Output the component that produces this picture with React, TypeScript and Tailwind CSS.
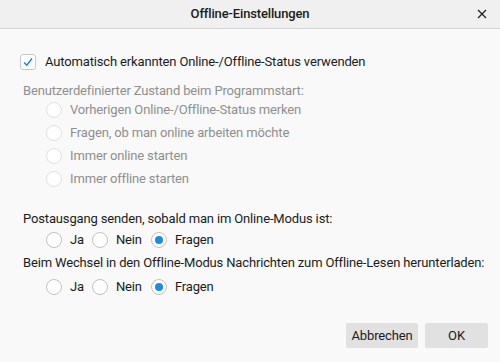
import React from "react";

function Radio({ checked, disabled }: { checked?: boolean; disabled?: boolean }) {
  return (
    <span
      className={`flex h-[16px] w-[16px] shrink-0 items-center justify-center rounded-full border bg-white ${
        disabled ? "border-[#e0e0e0]" : "border-[#c2c2c2]"
      }`}
    >
      {checked && <span className="h-[8px] w-[8px] rounded-full bg-[#1c8ddd]" />}
    </span>
  );
}

function RadioRow({ label, disabled }: { label: string; disabled?: boolean }) {
  return (
    <div className="flex h-[23px] items-center gap-[8px] pl-[46px]">
      <Radio disabled={disabled} />
      <span className={disabled ? "text-[#8f8f8f]" : ""}>{label}</span>
    </div>
  );
}

function InlineRadios() {
  return (
    <div className="flex h-[23px] items-center pl-[46px]">
      <Radio />
      <span className="ml-[8px]">Ja</span>
      <span className="ml-[8px]">
        <Radio />
      </span>
      <span className="ml-[8px]">Nein</span>
      <span className="ml-[9px]">
        <Radio checked />
      </span>
      <span className="ml-[8px]">Fragen</span>
    </div>
  );
}

export default function App() {
  return (
    <div
      className="flex h-[362px] w-[500px] flex-col bg-[#f9f9f9] text-[13px] tracking-[-0.15px] text-[#1b1b1b]"
      style={{ fontFamily: "Roboto, 'Liberation Sans', sans-serif" }}
    >
      <div className="relative flex h-[29px] items-center justify-center border-b border-[#d4d4d4] bg-[#f0f0f0]">
        <span className="font-medium">Offline-Einstellungen</span>
        <svg
          className="absolute right-[13px] top-[9px]"
          width="10"
          height="10"
          viewBox="0 0 10 10"
        >
          <path d="M1 1L9 9M9 1L1 9" stroke="#222" strokeWidth="1.3" />
        </svg>
      </div>
      <div className="flex flex-1 flex-col pt-[24px]">
        <div className="flex h-[18px] items-center gap-[9px] pl-[20px]">
          <span className="flex h-[16px] w-[16px] items-center justify-center rounded-[3px] border border-[#c9c9c9] bg-white">
            <svg width="12" height="12" viewBox="0 0 12 12">
              <path d="M2 6.5L4.8 9.3L10 2.5" fill="none" stroke="#0a84ff" strokeWidth="1.4" />
            </svg>
          </span>
          <span>Automatisch erkannten Online-/Offline-Status verwenden</span>
        </div>
        <div className="mt-[11px] flex h-[18px] items-center pl-[23px] text-[#8f8f8f]">
          Benutzerdefinierter Zustand beim Programmstart:
        </div>
        <div className="mt-[-2px] flex flex-col">
          <RadioRow label="Vorherigen Online-/Offline-Status merken" disabled />
          <RadioRow label="Fragen, ob man online arbeiten möchte" disabled />
          <RadioRow label="Immer online starten" disabled />
          <RadioRow label="Immer offline starten" disabled />
        </div>
        <div className="mt-[20px] flex h-[18px] items-center pl-[23px]">
          Postausgang senden, sobald man im Online-Modus ist:
        </div>
        <div className="mt-[0px]">
          <InlineRadios />
        </div>
        <div className="mt-[3px] flex h-[18px] items-center whitespace-nowrap pl-[23px]">
          Beim Wechsel in den Offline-Modus Nachrichten zum Offline-Lesen herunterladen:
        </div>
        <div className="mt-[3px]">
          <InlineRadios />
        </div>
        <div className="mt-auto flex justify-end gap-[7px] pb-[14px] pr-[12px]">
          <button className="h-[25px] w-[72px] rounded-[2px] bg-[#e1e1e1] text-[13px]">Abbrechen</button>
          <button className="h-[25px] w-[63px] rounded-[2px] bg-[#e1e1e1] text-[13px]">OK</button>
        </div>
      </div>
    </div>
  );
}
